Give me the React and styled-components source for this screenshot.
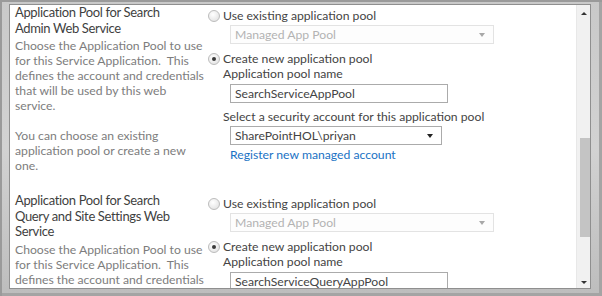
import React from "react";
import styled, { createGlobalStyle } from "styled-components";

const GlobalStyle = createGlobalStyle`
  html, body {
    margin: 0;
    padding: 0;
    background: #ffffff;
  }
  body {
    font-family: Lato, "Open Sans", sans-serif;
  }
`;

const Frame = styled.div`
  width: 602px;
  height: 296px;
  box-sizing: border-box;
  padding: 4px 11px 7px 9px;
  background: linear-gradient(180deg, #c9c9c9 0%, #d2d2d2 50%, #bdbdbd 100%);
  box-shadow: inset 2px 2px 0 #9a9a9a, inset -3px -3px 0 #a4a4a4;
  overflow: hidden;
`;

const Window = styled.div`
  height: 100%;
  box-sizing: border-box;
  border: 1px solid #8f8f8f;
  background: #ffffff;
  display: flex;
  overflow: hidden;
`;

const Content = styled.div`
  flex: 1;
  overflow: hidden;
  padding-left: 5px;
`;

const Section = styled.div`
  display: grid;
  grid-template-columns: 193px 1fr;
  padding-bottom: ${(p) => p.$gap || 0}px;
`;

const Info = styled.div`
  white-space: pre;
`;

const Heading = styled.div`
  font-size: 13px;
  letter-spacing: -0.35px;
  line-height: 15.5px;
  color: #3f3f3f;
`;

const Description = styled.div`
  margin-top: 2px;
  font-size: 12.2px;
  line-height: 15px;
  color: #7d7d7d;
`;

const Controls = styled.div`
  padding-top: 3px;
  font-size: 12.2px;
  color: #444444;
  white-space: nowrap;
`;

const RadioRow = styled.label`
  display: flex;
  align-items: center;
  gap: 3px;
  line-height: 15px;
  margin-top: ${(p) => p.$top || 0}px;
`;

const Radio = styled.span`
  width: 10px;
  height: 10px;
  border-radius: 50%;
  border: 1px solid #bcbcbc;
  background: radial-gradient(circle at 40% 35%, #ffffff 0%, #e4e4e4 80%);
  display: grid;
  place-items: center;

  &::after {
    content: "";
    width: 4px;
    height: 4px;
    border-radius: 50%;
    background: ${(p) => (p.$checked ? "#3a3a3a" : "transparent")};
  }
`;

const Label = styled.div`
  padding-left: 15px;
  line-height: 15px;
  margin-top: ${(p) => p.$top || 0}px;
`;

const Field = styled.div`
  margin-left: 22px;
  margin-top: ${(p) => p.$top || 0}px;
  width: ${(p) => p.$width}px;
  height: 19px;
  box-sizing: border-box;
  display: flex;
  align-items: center;
  justify-content: space-between;
  padding: 0 8px 0 4px;
  border: 1px solid ${(p) => (p.$disabled ? "#e3e3e3" : "#ababab")};
  background: ${(p) => (p.$disabled ? "#fdfdfd" : "#ffffff")};
  color: ${(p) => (p.$disabled ? "#b3b3b3" : "#444444")};
  font-size: 12.2px;
`;

const Caret = styled.span`
  width: 0;
  height: 0;
  border-left: 3px solid transparent;
  border-right: 3px solid transparent;
  border-top: 4px solid ${(p) => (p.$disabled ? "#a8a8a8" : "#222222")};
`;

const Link = styled.a`
  display: block;
  margin-left: 22px;
  margin-top: 2px;
  line-height: 15px;
  color: #1a72c4;
  text-decoration: none;
`;

const Scrollbar = styled.div`
  width: 13px;
  background: #f1f1f1;
  border-left: 1px solid #e8e8e8;
  display: flex;
  flex-direction: column;
  align-items: center;
`;

const Arrow = styled.span`
  width: 0;
  height: 0;
  margin: ${(p) => (p.$down ? "auto 0 4px" : "7px 0 0")};
  border-left: 3px solid transparent;
  border-right: 3px solid transparent;
  ${(p) => (p.$down ? "border-top" : "border-bottom")}: 3px solid #333333;
`;

const Thumb = styled.div`
  width: 10px;
  height: 99px;
  margin-top: 123px;
  margin-left: 3px;
  background: #c4c4c4;
`;

const description =
  "Choose the Application Pool to use\nfor this Service Application.  This\ndefines the account and credentials\nthat will be used by this web\nservice.\n\nYou can choose an existing\napplication pool or create a new\none.";

const PoolSection = ({ title, poolName, showAccount, gap }) => (
  <Section $gap={gap}>
    <Info>
      <Heading>{title}</Heading>
      <Description>{description}</Description>
    </Info>
    <Controls>
      <RadioRow>
        <Radio />
        Use existing application pool
      </RadioRow>
      <Field $disabled $width={264} $top={2}>
        Managed App Pool
        <Caret $disabled />
      </Field>
      <RadioRow $top={7}>
        <Radio $checked />
        Create new application pool
      </RadioRow>
      <Label>Application pool name</Label>
      <Field $width={218} $top={3}>
        {poolName}
      </Field>
      {showAccount && (
        <>
          <Label $top={6}>
            Select a security account for this application pool
          </Label>
          <Field $width={212} $top={2}>
            SharePointHOL\priyan
            <Caret />
          </Field>
          <Link href="#">Register new managed account</Link>
        </>
      )}
    </Controls>
  </Section>
);

export default function App() {
  return (
    <>
      <GlobalStyle />
      <Frame>
        <Window>
          <Content>
            <PoolSection
              title={"Application Pool for Search\nAdmin Web Service"}
              poolName="SearchServiceAppPool"
              showAccount
              gap={20}
            />
            <PoolSection
              title={"Application Pool for Search\nQuery and Site Settings Web\nService"}
              poolName="SearchServiceQueryAppPool"
            />
          </Content>
          <Scrollbar>
            <Arrow />
            <Thumb />
            <Arrow $down />
          </Scrollbar>
        </Window>
      </Frame>
    </>
  );
}
